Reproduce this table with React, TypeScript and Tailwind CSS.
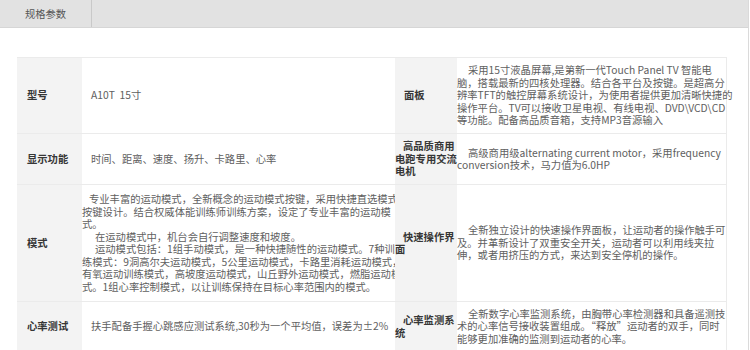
import React from "react";

type Line = { t: string; i?: number };

const font = { fontFamily: '"Noto Sans CJK SC", "Noto Sans", sans-serif' };

function Label({ lines }: { lines: Line[] }) {
  return (
    <div className="bg-[#f3f3f3] flex flex-col justify-center text-[10.3px] leading-[12.5px] font-bold text-[#363636]">
      {lines.map((l, k) => (
        <div key={k} className="whitespace-nowrap" style={{ paddingLeft: l.i ?? 0 }}>
          {l.t}
        </div>
      ))}
    </div>
  );
}

function Value({ lines }: { lines: Line[] }) {
  return (
    <div className="flex flex-col justify-center text-[10.3px] leading-[12.5px] text-[#606060]">
      {lines.map((l, k) => (
        <div key={k} className="whitespace-pre" style={{ paddingLeft: l.i ?? 0 }}>
          {l.t}
        </div>
      ))}
    </div>
  );
}

const rows: { h: string; a: Line[]; b: Line[]; c: Line[]; d: Line[] }[] = [
  {
    h: "h-[76px]",
    a: [{ t: "型号", i: 10 }],
    b: [{ t: "A10T  15寸", i: 9 }],
    c: [{ t: "面板", i: 9 }],
    d: [
      { t: "采用15寸液晶屏幕,是第新一代Touch Panel TV 智能电", i: 11 },
      { t: "脑，搭载最新的四核处理器。结合各平台及按键。是超高分" },
      { t: "辨率TFT的触控屏幕系统设计，为使用者提供更加清晰快捷的" },
      { t: "操作平台。TV可以接收卫星电视、有线电视、DVD\\VCD\\CD" },
      { t: "等功能。配备高品质音箱，支持MP3音源输入" },
    ],
  },
  {
    h: "h-[51px]",
    a: [{ t: "显示功能", i: 10 }],
    b: [{ t: "时间、距离、速度、扬升、卡路里、心率", i: 9 }],
    c: [{ t: "高品质商用", i: 8 }, { t: "电跑专用交流" }, { t: "电机" }],
    d: [
      { t: "高级商用级alternating current motor，采用frequency", i: 11 },
      { t: "conversion技术，马力值为6.0HP" },
    ],
  },
  {
    h: "h-[117px]",
    a: [{ t: "模式", i: 10 }],
    b: [
      { t: "专业丰富的运动模式，全新概念的运动模式按键，采用快捷直选模式", i: 7 },
      { t: "按键设计。结合权威体能训练师训练方案，设定了专业丰富的运动模" },
      { t: "式。" },
      { t: "在运动模式中，机台会自行调整速度和坡度。", i: 13 },
      { t: "运动模式包括：1组手动模式，是一种快捷随性的运动模式。7种训", i: 13 },
      { t: "练模式：9洞高尔夫运动模式，5公里运动模式，卡路里消耗运动模式，" },
      { t: "有氧运动训练模式，高坡度运动模式，山丘野外运动模式，燃脂运动模" },
      { t: "式。1组心率控制模式，以让训练保持在目标心率范围内的模式。" },
    ],
    c: [{ t: "快速操作界", i: 8 }, { t: "面" }],
    d: [
      { t: "全新独立设计的快速操作界面板，让运动者的操作触手可", i: 11 },
      { t: "及。并革新设计了双重安全开关，运动者可以利用线夹拉" },
      { t: "伸，或者用挤压的方式，来达到安全停机的操作。" },
    ],
  },
  {
    h: "h-[50px]",
    a: [{ t: "心率测试", i: 10 }],
    b: [{ t: "扶手配备手握心跳感应测试系统,30秒为一个平均值，误差为±2%", i: 9 }],
    c: [{ t: "心率监测系", i: 8 }, { t: "统" }],
    d: [
      { t: "全新数字心率监测系统，由胸带心率检测器和具备遥测技", i: 11 },
      { t: "术的心率信号接收装置组成。“释放”运动者的双手，同时" },
      { t: "能够更加准确的监测到运动者的心率。" },
    ],
  },
];

export default function App() {
  return (
    <div className="w-[750px] h-[350px] overflow-hidden bg-white" style={font}>
      <div className="w-[749px] h-full border-r border-[#dadada]">
        <div className="h-[28px] bg-[#e2e2e2] border-b border-[#d6d6d6] flex">
          <div className="w-[92px] border-r border-[#c9c9c9] flex items-center justify-center text-[10.3px] text-[#555]">
            规格参数
          </div>
        </div>
        <div className="mt-[29px] ml-[17px] w-[710px] border-t border-r border-[#ebebeb]">
          {rows.map((r, k) => (
            <div
              key={k}
              className={`grid grid-cols-[65px_313px_62px_270px] border-b border-[#ebebeb] ${r.h}`}
            >
              <Label lines={r.a} />
              <Value lines={r.b} />
              <Label lines={r.c} />
              <Value lines={r.d} />
            </div>
          ))}
        </div>
      </div>
    </div>
  );
}
